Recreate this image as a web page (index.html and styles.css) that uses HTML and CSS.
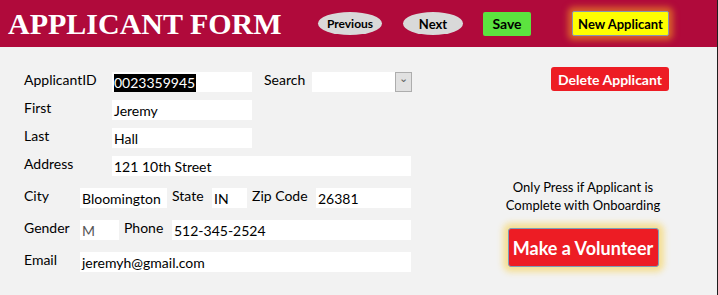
FILE: index.html
```html
<!DOCTYPE html>
<html>
<head>
  <title>Applicant Form</title>
  <link rel="stylesheet" href="styles.css">
</head>
<body>
  <div id="form-window">
    <div id="form-header">
      <h1 class="form-title">APPLICANT FORM</h1>
      <button class="nav-btn btn-prev">Previous</button>
      <button class="nav-btn btn-next">Next</button>
      <button class="save-btn">Save</button>
      <button class="new-btn">New Applicant</button>
    </div>

    <div id="form-body">
      <div class="fields">
        <div class="row">
          <span class="label w88">ApplicantID</span>
          <span class="box w140"><span class="selected">0023359945</span></span>
          <span class="label search-label">Search</span>
          <span class="combo"><span class="combo-arrow">&#8964;</span></span>
        </div>
        <div class="row">
          <span class="label w88">First</span>
          <span class="box w140">Jeremy</span>
        </div>
        <div class="row">
          <span class="label w88">Last</span>
          <span class="box w140">Hall</span>
        </div>
        <div class="row">
          <span class="label w88">Address</span>
          <span class="box w299">121 10th Street</span>
        </div>
        <div class="row wide-gap">
          <span class="label w56">City</span>
          <span class="box w87">Bloomington</span>
          <span class="label state-label">State</span>
          <span class="box w35">IN</span>
          <span class="label zip-label">Zip Code</span>
          <span class="box w95">26381</span>
        </div>
        <div class="row wide-gap">
          <span class="label w56">Gender</span>
          <span class="box w39 muted">M</span>
          <span class="label phone-label">Phone</span>
          <span class="box w239">512-345-2524</span>
        </div>
        <div class="row wide-gap">
          <span class="label w56">Email</span>
          <span class="box w331">jeremyh@gmail.com</span>
        </div>
      </div>

      <div class="side">
        <button class="delete-btn">Delete Applicant</button>
        <div class="volunteer-area">
          <p class="note">Only Press if Applicant is<br>Complete with Onboarding</p>
          <button class="volunteer-btn">Make a Volunteer</button>
        </div>
      </div>
    </div>
  </div>
</body>
</html>
```

FILE: styles.css
```css
body {
  margin: 0;
  font-family: Lato, "Open Sans", sans-serif;
  background: #f2f2f2;
}
#form-window {
  width: 717px;
  height: 295px;
  border-right: 1px solid #1e1e1e;
  background: #f2f2f2;
}
#form-header {
  height: 47px;
  background: #b00a3b;
  display: flex;
  align-items: center;
}
.form-title {
  margin: 0 0 0 8px;
  width: 310px;
  font-family: "Liberation Serif", serif;
  font-size: 30px;
  font-weight: bold;
  color: #fff;
}
#form-header button {
  font-family: Lato, sans-serif;
  font-weight: bold;
  color: #000;
  cursor: pointer;
  padding: 0;
}
.nav-btn {
  height: 23px;
  border: none;
  border-radius: 50%;
  background: #d9d9d9;
  font-size: 12px;
}
.btn-prev {
  width: 64px;
}
.btn-next {
  width: 60px;
  margin-left: 21px;
  font-size: 13px;
}
.save-btn {
  width: 48px;
  height: 24px;
  margin-left: 20px;
  border: none;
  border-radius: 2px;
  background: #5ce33f;
  font-size: 14px;
}
.new-btn {
  width: 97px;
  height: 25px;
  margin-left: 41px;
  border: 1px solid #8a93b0;
  border-radius: 2px;
  background: #ffff00;
  font-size: 13px;
  box-shadow: 0 0 6px 4px #d9622a;
}
#form-body {
  display: flex;
}
.fields {
  padding: 25px 0 0 24px;
  width: 396px;
}
.row {
  display: flex;
  height: 20px;
  margin-bottom: 8px;
  font-size: 14px;
  color: #000;
}
.row.wide-gap {
  margin-top: 12px;
}
.label {
  line-height: 16px;
}
.box {
  background: #fff;
  height: 20px;
  line-height: 22px;
  padding-left: 2px;
  box-sizing: border-box;
  white-space: nowrap;
  overflow: hidden;
}
.selected {
  background: #000;
  color: #fff;
  padding: 0 1px 3px 0;
}
.muted {
  color: #555;
}
.w88 { width: 88px; }
.w56 { width: 56px; }
.w140 { width: 140px; }
.w299 { width: 299px; }
.w87 { width: 87px; }
.w35 { width: 35px; }
.w95 { width: 95px; }
.w39 { width: 39px; }
.w239 { width: 239px; }
.w331 { width: 331px; }
.search-label {
  width: 48px;
  margin-left: 12px;
}
.state-label {
  width: 40px;
  margin-left: 5px;
}
.zip-label {
  width: 64px;
  margin-left: 5px;
}
.phone-label {
  width: 48px;
  margin-left: 5px;
}
.combo {
  width: 100px;
  height: 20px;
  background: #fff;
  display: flex;
  justify-content: flex-end;
}
.combo-arrow {
  width: 15px;
  height: 18px;
  border: 1px solid #adadad;
  background: #e1e1e1;
  color: #606060;
  font-size: 11px;
  line-height: 10px;
  text-align: center;
}
.side {
  flex: 1;
  display: flex;
  flex-direction: column;
  align-items: flex-end;
  padding-top: 20px;
}
.delete-btn {
  width: 118px;
  height: 24px;
  margin-right: 48px;
  border: none;
  border-radius: 3px;
  background: #ed1c24;
  color: #fff;
  font-family: Lato, sans-serif;
  font-size: 14px;
  font-weight: bold;
  padding: 0;
}
.volunteer-area {
  width: 186px;
  margin: 87px 41px 0 0;
  text-align: center;
}
.note {
  margin: 0;
  font-size: 13px;
  line-height: 18px;
  color: #000;
}
.volunteer-btn {
  width: 151px;
  height: 39px;
  margin-top: 14px;
  border: 1px solid #7f9db9;
  border-radius: 3px;
  background: #ed1c24;
  color: #fff;
  font-family: Lato, sans-serif;
  font-size: 18px;
  font-weight: bold;
  box-shadow: 0 0 6px 5px #f5df94;
  padding: 0;
}
```
